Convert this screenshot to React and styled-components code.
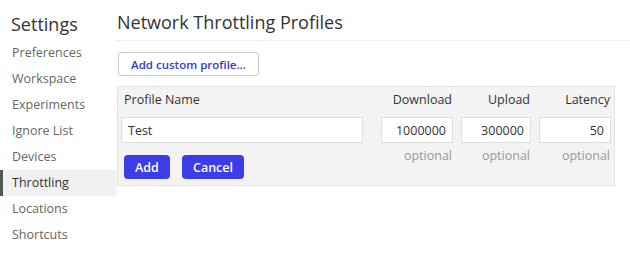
import React from "react";
import styled, { createGlobalStyle } from "styled-components";

const GlobalStyle = createGlobalStyle`
  body {
    margin: 0;
    font-family: "Open Sans", "Liberation Sans", sans-serif;
    background: #fff;
    color: #333;
  }
`;

const Page = styled.div`
  display: flex;
  width: 630px;
  height: 268px;
`;

const Sidebar = styled.nav`
  flex: 0 0 116px;
  display: flex;
  flex-direction: column;
`;

const SideTitle = styled.h1`
  margin: 0;
  height: 40px;
  padding: 12px 0 0 11px;
  box-sizing: border-box;
  font-size: 18px;
  font-weight: 400;
  line-height: 24px;
  color: #333;
`;

const NavItem = styled.div`
  height: 26px;
  line-height: 26px;
  padding-left: ${(p) => (p.$active ? "9px" : "12px")};
  font-size: 12.5px;
  color: ${(p) => (p.$active ? "#333" : "#666")};
  background: ${(p) => (p.$active ? "#f1f1f1" : "transparent")};
  border-left: ${(p) => (p.$active ? "3px solid #555" : "none")};
`;

const Main = styled.main`
  flex: 1;
  display: flex;
  flex-direction: column;
`;

const Heading = styled.h2`
  margin: 0;
  height: 41px;
  box-sizing: border-box;
  padding: 10px 0 0 1px;
  font-size: 18px;
  font-weight: 400;
  line-height: 24px;
  color: #333;
  border-bottom: 1px solid #eee;
`;

const Content = styled.div`
  padding: 11px 15px 0 1px;
  display: flex;
  flex-direction: column;
  align-items: flex-start;
`;

const OutlineButton = styled.button`
  height: 24px;
  width: 141px;
  margin-left: 1px;
  padding: 0;
  background: #fff;
  border: 1px solid #c9c9c9;
  border-radius: 4px;
  font-family: inherit;
  font-size: 11.5px;
  font-weight: 600;
  color: #3b3bc6;
`;

const Panel = styled.div`
  margin-top: 10px;
  width: 498px;
  box-sizing: border-box;
  background: #f3f3f3;
  border: 1px solid #e2e2e2;
  padding: 0 3px 6px 3px;
  display: grid;
  grid-template-columns: 1fr 72px 70px 72px;
  column-gap: 8px;
`;

const HeadCell = styled.div`
  padding: 5px ${(p) => (p.$right ? "1px" : "0")} 9px ${(p) => (p.$right ? "0" : "3px")};
  font-size: 12.5px;
  line-height: 16px;
  color: #333;
  text-align: ${(p) => (p.$right ? "right" : "left")};
`;

const Field = styled.input`
  height: 26px;
  box-sizing: border-box;
  width: 100%;
  border: 1px solid #dedede;
  background: #fff;
  padding: 0 6px;
  font-family: inherit;
  font-size: 12.5px;
  color: #333;
  text-align: ${(p) => (p.$right ? "right" : "left")};
  outline: none;
`;

const NameCell = styled.div`
  padding-right: 10px;
  min-width: 0;
`;

const Actions = styled.div`
  display: flex;
  gap: 12px;
  padding: 12px 0 0 3px;
`;

const SolidButton = styled.button`
  height: 24px;
  width: ${(p) => p.$w}px;
  padding: 0;
  border: none;
  border-radius: 4px;
  background: #3c3de9;
  color: #fff;
  font-family: inherit;
  font-size: 12.5px;
  font-weight: 600;
`;

const Hint = styled.div`
  padding: 5px 1px 0 0;
  font-size: 12.5px;
  line-height: 16px;
  color: #999;
  text-align: right;
`;

const navItems = [
  "Preferences",
  "Workspace",
  "Experiments",
  "Ignore List",
  "Devices",
  "Throttling",
  "Locations",
  "Shortcuts",
];

export default function App() {
  return (
    <Page>
      <GlobalStyle />
      <Sidebar>
        <SideTitle>Settings</SideTitle>
        {navItems.map((item) => (
          <NavItem key={item} $active={item === "Throttling"}>
            {item}
          </NavItem>
        ))}
      </Sidebar>
      <Main>
        <Heading>Network Throttling Profiles</Heading>
        <Content>
          <OutlineButton>Add custom profile...</OutlineButton>
          <Panel>
            <HeadCell>Profile Name</HeadCell>
            <HeadCell $right>Download</HeadCell>
            <HeadCell $right>Upload</HeadCell>
            <HeadCell $right>Latency</HeadCell>

            <NameCell>
              <Field defaultValue="Test" />
            </NameCell>
            <Field $right defaultValue="1000000" />
            <Field $right defaultValue="300000" />
            <Field $right defaultValue="50" />

            <Actions>
              <SolidButton $w={46}>Add</SolidButton>
              <SolidButton $w={62}>Cancel</SolidButton>
            </Actions>
            <Hint>optional</Hint>
            <Hint>optional</Hint>
            <Hint>optional</Hint>
          </Panel>
        </Content>
      </Main>
    </Page>
  );
}
